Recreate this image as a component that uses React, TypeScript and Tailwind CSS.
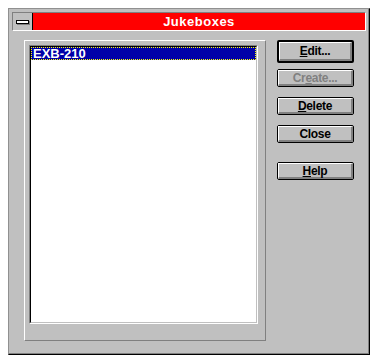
// Win 3.1 style "Jukeboxes" dialog
const font = { fontFamily: '"Liberation Sans", Arial, sans-serif' };

function Button({
  before,
  mnemonic,
  rest,
  isDefault,
  disabled,
}: {
  before?: string;
  mnemonic?: string;
  rest: string;
  isDefault?: boolean;
  disabled?: boolean;
}) {
  return (
    <div
      className={
        "w-[77px] rounded-[2px] border-black bg-[#c0c0c0] " +
        (isDefault ? "h-[23px] border-2" : "h-[18px] border")
      }
    >
      <div className="flex h-full items-center justify-center border-t border-l border-white border-r-2 border-b-2 border-r-[#808080] border-b-[#808080]">
        <span
          className={
            "text-[12px] font-bold leading-none tracking-[-0.3px] " +
            (disabled ? "text-[#808080]" : "text-black")
          }
        >
          {before}
          {mnemonic && <u>{mnemonic}</u>}
          {rest}
        </span>
      </div>
    </div>
  );
}

export default function App() {
  return (
    <div className="h-[363px] w-[380px] bg-white p-2" style={font}>
      {/* Ventana */}
      <div className="h-[347px] w-[362px] border border-t-[#909090] border-l-[#909090] border-r-black border-b-black bg-[#c0c0c0]">
        <div className="flex h-full flex-col border-r border-b border-[#808080] pt-[3px] pl-[3px] pr-[2px]">
          {/* Barra de título */}
          <div className="flex h-[19px] border-t border-l border-t-[#808080] border-l-[#808080] border-r border-b border-r-white border-b-white">
            <div className="flex w-[20px] items-center justify-center border-r border-black bg-[#c0c0c0]">
              <div className="h-[4px] w-[13px] border border-black bg-white shadow-[1px_1px_0_#808080]" />
            </div>
            <div className="flex flex-1 items-center justify-center bg-[#ff0000]">
              <span className="text-[13px] font-bold leading-none tracking-[0.5px] text-white">
                Jukeboxes
              </span>
            </div>
          </div>

          {/* Cuerpo */}
          <div className="mt-[9px] ml-[12px] flex gap-[11px]">
            <div className="h-[301px] w-[242px] border-t border-l border-white border-r border-b border-r-[#808080] border-b-[#808080] pt-[4px] pl-[4px]">
              <div className="h-[279px] w-[229px] border-t border-l border-t-[#808080] border-l-[#808080] border-r border-b border-r-white border-b-white">
                <div className="h-full border-t border-l border-black border-r border-b border-r-[#c0c0c0] border-b-[#c0c0c0] bg-white">
                  <div className="flex h-[13px] items-center bg-[#0000a8] pl-[2px] outline-1 -outline-offset-1 outline-dotted outline-[#ffff00]">
                    <span className="text-[13px] font-bold leading-none text-white">
                      EXB-210
                    </span>
                  </div>
                </div>
              </div>
            </div>

            {/* Botones */}
            <div className="flex flex-col">
              <Button mnemonic="E" rest="dit..." isDefault />
              <div className="mt-[6px]">
                <Button before="Cr" mnemonic="e" rest="ate..." disabled />
              </div>
              <div className="mt-[10px]">
                <Button mnemonic="D" rest="elete" />
              </div>
              <div className="mt-[10px]">
                <Button rest="Close" />
              </div>
              <div className="mt-[19px]">
                <Button mnemonic="H" rest="elp" />
              </div>
            </div>
          </div>
        </div>
      </div>
    </div>
  );
}
